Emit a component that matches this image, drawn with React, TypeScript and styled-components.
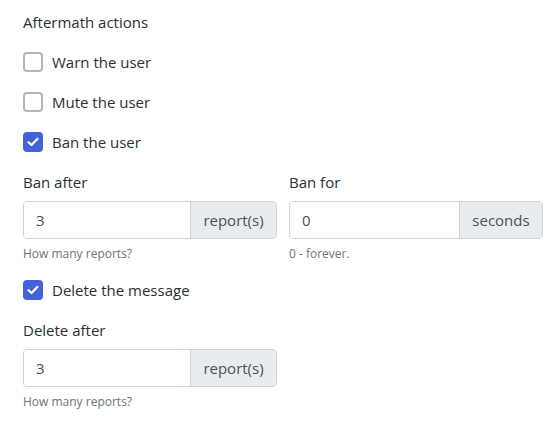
import React from "react";
import styled, { createGlobalStyle } from "styled-components";

const Global = createGlobalStyle`
  html, body { margin: 0; padding: 0; background: #fff; }
  body {
    font-family: "Open Sans", "Noto Sans", sans-serif;
    font-size: 15px;
    color: #2b2f33;
  }
  * { box-sizing: border-box; }
`;

const Page = styled.div`
  padding: 12px 14px 0 23px;
  width: 555px;
`;

const Heading = styled.div`
  height: 20px;
  line-height: 20px;
  margin-bottom: 20px;
`;

const CheckRow = styled.label`
  display: flex;
  align-items: center;
  gap: 9px;
  height: 20px;
  line-height: 20px;
  margin-bottom: 20px;
  cursor: pointer;
`;

const Box = styled.span<{ $checked?: boolean }>`
  width: 20px;
  height: 20px;
  border-radius: 4px;
  flex: none;
  display: flex;
  align-items: center;
  justify-content: center;
  border: 2px solid ${(p) => (p.$checked ? "#4361d8" : "#b5b5b5")};
  background: ${(p) => (p.$checked ? "#4361d8" : "#fff")};
`;

const Grid = styled.div<{ $top: number }>`
  display: grid;
  grid-template-columns: 254px 254px;
  column-gap: 12px;
  margin-top: ${(p) => p.$top}px;
`;

const Field = styled.div`
  display: flex;
  flex-direction: column;
`;

const Label = styled.div`
  height: 20px;
  line-height: 20px;
  margin-bottom: 9px;
`;

const Group = styled.div<{ $addon: number }>`
  display: grid;
  grid-template-columns: 1fr ${(p) => p.$addon}px;
  height: 38px;
  border: 1px solid #ced4da;
  border-radius: 4px;
  overflow: hidden;
`;

const Input = styled.div`
  display: flex;
  align-items: center;
  padding-left: 12px;
  color: #495057;
  background: #fff;
`;

const Addon = styled.div`
  display: flex;
  align-items: center;
  justify-content: center;
  background: #e9ecef;
  border-left: 1px solid #ced4da;
  color: #495057;
`;

const Help = styled.div`
  font-size: 12px;
  color: #6c757d;
  height: 16px;
  line-height: 16px;
  margin-top: 7px;
`;

const Spacer = styled.div<{ $h: number }>`
  height: ${(p) => p.$h}px;
`;

const Check = () => (
  <svg width="12" height="10" viewBox="0 0 12 10">
    <path d="M1.5 5.2 L4.5 8 L10.5 1.8" fill="none" stroke="#fff" strokeWidth="2.2" strokeLinecap="round" strokeLinejoin="round" />
  </svg>
);

const CheckItem = ({ label, checked }: { label: string; checked?: boolean }) => (
  <CheckRow>
    <Box $checked={checked}>{checked && <Check />}</Box>
    <span>{label}</span>
  </CheckRow>
);

export default function App() {
  return (
    <Page>
      <Global />
      <Heading>Aftermath actions</Heading>
      <CheckItem label="Warn the user" />
      <CheckItem label="Mute the user" />
      <CheckItem label="Ban the user" checked />
      <Grid $top={1}>
        <Field>
          <Label>Ban after</Label>
          <Group $addon={86}>
            <Input>3</Input>
            <Addon>report(s)</Addon>
          </Group>
          <Help>How many reports?</Help>
        </Field>
        <Field>
          <Label>Ban for</Label>
          <Group $addon={83}>
            <Input>0</Input>
            <Addon>seconds</Addon>
          </Group>
          <Help>0 - forever.</Help>
        </Field>
      </Grid>
      <Spacer $h={18} />
      <CheckItem label="Delete the message" checked />
      <Grid $top={3}>
        <Field>
          <Label>Delete after</Label>
          <Group $addon={86}>
            <Input>3</Input>
            <Addon>report(s)</Addon>
          </Group>
          <Help>How many reports?</Help>
        </Field>
      </Grid>
    </Page>
  );
}
